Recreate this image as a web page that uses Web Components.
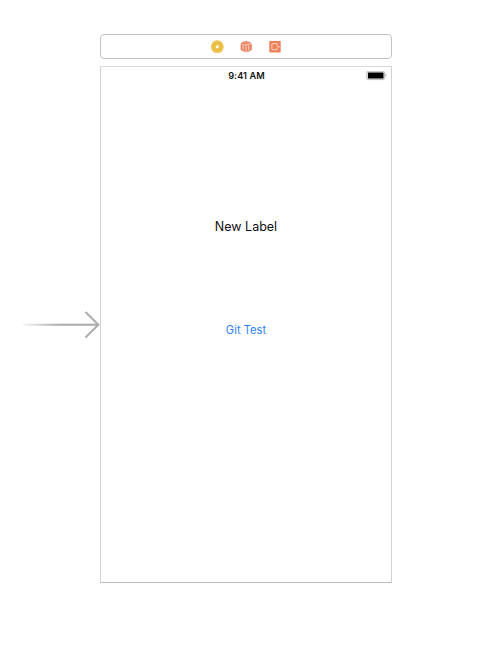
<!DOCTYPE html>
<html lang="en">
<head>
<meta charset="utf-8">
<title>Storyboard</title>
<style>
html,body{margin:0;height:100%;background:#fff;overflow:hidden}
body{font-family:Inter,"Liberation Sans",sans-serif}
</style>
</head>
<body>
<story-board>
  <entry-arrow slot="entry"></entry-arrow>
  <scene-dock></scene-dock>
  <phone-scene>
    <status-bar slot="status">9:41 AM</status-bar>
    <ui-label>New Label</ui-label>
    <ui-button>Git Test</ui-button>
  </phone-scene>
</story-board>
<script>
const define = (name, html) => customElements.define(name, class extends HTMLElement {
  constructor() {
    super();
    const t = document.createElement('template');
    t.innerHTML = html;
    this.attachShadow({mode: 'open'}).append(t.content.cloneNode(true));
  }
});

define('story-board', `<style>
:host{display:grid;grid-template-columns:100px 292px;width:500px;height:650px;box-sizing:border-box;padding-top:34px;background:#fff}
.entry{padding-top:276px}
.scene{display:flex;flex-direction:column;gap:7px}
</style><div class="entry"><slot name="entry"></slot></div><div class="scene"><slot></slot></div>`);

define('entry-arrow', `<style>:host{display:block}svg{display:block}</style>
<svg width="100" height="30" viewBox="0 0 100 30" fill="none">
<defs><linearGradient id="g" gradientUnits="userSpaceOnUse" x1="22" y1="0" x2="60" y2="0"><stop stop-color="#adadad" stop-opacity=".1"/><stop offset="1" stop-color="#adadad"/></linearGradient></defs>
<rect x="23" y="13.7" width="75" height="2.1" fill="url(#g)"/>
<path d="M85.5 2.1 98.3 14.8 85.5 27.5" stroke="#adadad" stroke-width="2.1"/></svg>`);

define('scene-dock', `<style>
:host{display:flex;box-sizing:border-box;height:25px;border:1px solid #c3c3c3;border-radius:4px;justify-content:center;align-items:center}
svg{display:block}
</style>
<svg width="72" height="14" viewBox="0 0 72 14">
<g transform="translate(0.3 -.3)"><circle cx="7" cy="7" r="6.4" fill="#edc34e"/><circle cx="7" cy="7" r="3.6" fill="none" stroke="#e5b943"/><circle cx="7" cy="7" r="1.5" fill="#fffbe9"/></g>
<g transform="translate(29.2 -.3)"><path d="M7 1.4 10.8 2.4 12.6 4.4v5.2L11 11.4 7 12.6 3 11.4 1.4 9.6V4.4L3.2 2.4Z" fill="#ed825f"/><path d="M2.2 4.9 6.6 5.5 12 3.9M6.8 6.5v5.8M3.9 6.6v3.6M9.6 5.8v4.8" stroke="#fbd9cc" fill="none"/><path d="M4 3.3 7 2.5 9.6 3.3" stroke="#f3ab92" stroke-width=".7" fill="none"/></g>
<g transform="translate(58 -.3)"><rect x="1.3" y="1.3" width="11.4" height="11.4" rx=".6" fill="#ed815a"/><path d="M9 5.3V4H3.9v6H9V8.7" fill="none" stroke="#fad2c2"/><path d="M8.6 5.3 10.8 7 8.6 8.7M10.5 7H12" fill="none" stroke="#fad2c2" stroke-width=".9"/></g>
</svg>`);

define('phone-scene', `<style>
:host{display:flex;flex-direction:column;align-items:center;box-sizing:border-box;height:517px;border:1px solid #d2d2d2;border-top-color:#dadada;border-bottom-color:#bcbcbc;background:#fff}
.status{align-self:stretch}
.content{display:flex;flex-direction:column;align-items:center;padding-top:133px;gap:83px}
</style><div class="status"><slot name="status"></slot></div><div class="content"><slot></slot></div>`);

define('status-bar', `<style>
:host{display:grid;grid-template-columns:1fr auto 1fr;align-items:center;height:17px;color:#151515;font-size:9.2px;font-weight:600;line-height:17px;letter-spacing:.1px;padding-right:4px;padding-left:5px}
.battery{justify-self:end}svg{display:block}
</style><span></span><span><slot></slot></span><span class="battery">
<svg width="21" height="10" viewBox="0 0 21 10"><rect x=".7" y=".2" width="18" height="8.4" rx="2" fill="#e6e6e6" stroke="#bdbdbd"/><rect x="2" y="1.5" width="15.5" height="5.9" rx=".5" fill="#000"/><path d="M19.3 2.8Q21.6 4.4 19.3 6Z" fill="#aaa"/></svg></span>`);

define('ui-label', `<style>:host{display:block;color:#111;font-size:12.5px;line-height:20px}</style><slot></slot>`);
define('ui-button', `<style>:host{display:block;color:#2f81f7;font-size:11.2px;line-height:20px}</style><slot></slot>`);
</script>
</body>
</html>
